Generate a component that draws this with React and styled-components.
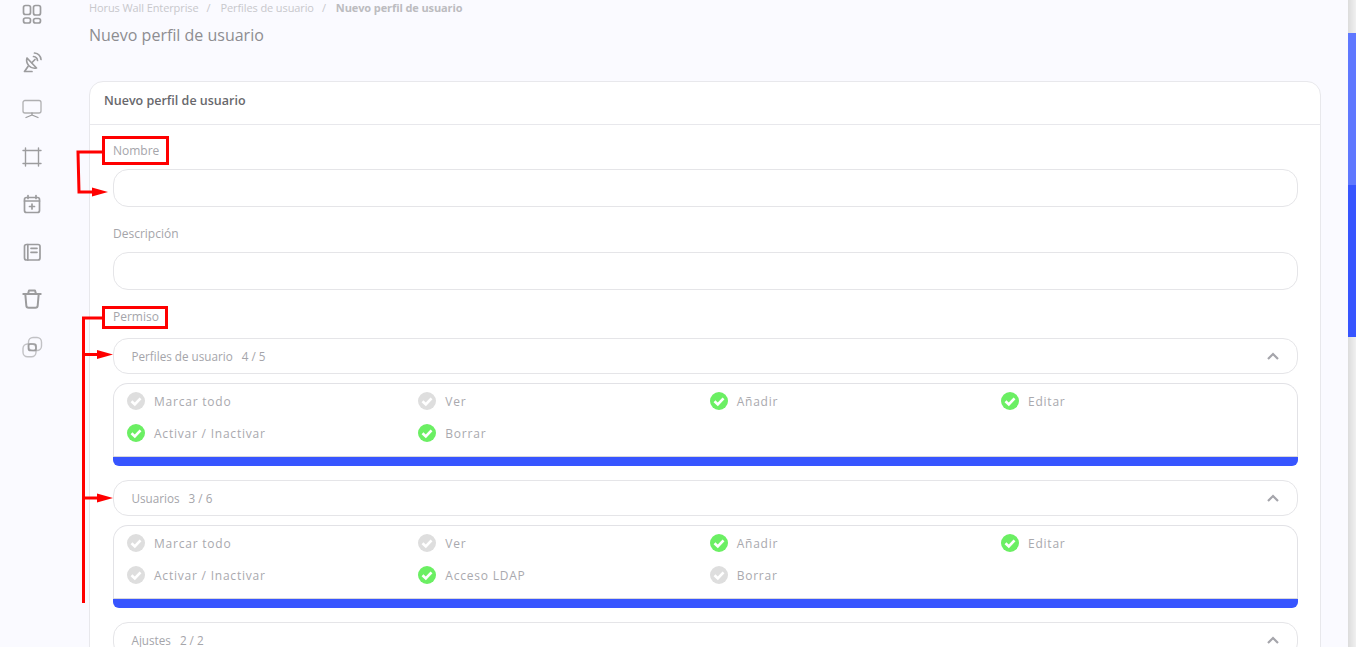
import React from 'react';
import styled, { createGlobalStyle } from 'styled-components';

const GlobalStyle = createGlobalStyle`
  html, body {
    margin: 0;
    height: 100%;
    overflow: hidden;
    background: #fafaff;
    font-family: 'Open Sans', 'Liberation Sans', sans-serif;
  }
  * { box-sizing: border-box; }
`;

const Shell = styled.div`
  position: relative;
  display: flex;
  width: 1356px;
  height: 647px;
  overflow: hidden;
  background: #fafaff;
`;

const Sidebar = styled.nav`
  flex: 0 0 64px;
  display: flex;
  flex-direction: column;
  align-items: center;
  gap: 23.5px;
  margin-top: 2px;
`;

const NavIcon = styled.svg`
  width: 24px;
  height: 24px;
  fill: none;
  stroke: #9c9c9e;
  stroke-width: 1.7;
  stroke-linecap: round;
  stroke-linejoin: round;
`;

const Main = styled.main`
  flex: 1;
  min-width: 0;
  padding: 0 27px 0 25px;
`;

const Crumbs = styled.div`
  display: flex;
  height: 14px;
  align-items: center;
  font-size: 11px;
  letter-spacing: -0.1px;
  color: #c8c8cc;
`;

const CrumbSep = styled.span`
  margin: 0 10px 0 8px;
`;

const CrumbNow = styled.b`
  font-weight: 700;
  color: #bcbcc0;
`;

const Title = styled.h1`
  margin: 11px 0 0;
  font-size: 16px;
  line-height: 20px;
  font-weight: 400;
  color: #8d8d91;
`;

const Card = styled.section`
  margin-top: 36px;
  background: #fff;
  border: 1px solid #e8e8ec;
  border-radius: 14px 14px 0 0;
  width: 1232px;
`;

const CardHead = styled.div`
  height: 43px;
  padding: 0 14px 6px;
  display: flex;
  align-items: center;
  border-bottom: 1px solid #e8e8ec;
  font-size: 12.5px;
  font-weight: 600;
  color: #68686c;
`;

const CardBody = styled.div`
  padding: 19px 22px 0 23px;
`;

const Label = styled.label`
  display: block;
  height: 14px;
  line-height: 14px;
  margin-bottom: ${p => p.$gap}px;
  font-size: 12px;
  color: #a5a5aa;
`;

const Input = styled.div`
  height: 38px;
  margin-bottom: 20px;
  border: 1px solid #e5e5e8;
  border-radius: 15px;
  background: #fff;
`;

const AccordionHead = styled.div`
  display: flex;
  align-items: center;
  justify-content: space-between;
  height: 36px;
  padding: 0 17px 0 17.500px;
  border: 1px solid #e5e5e8;
  border-radius: 15px;
  font-size: 11.7px;
  color: #a5a5aa;
`;

const Count = styled.span`
  margin-left: 9px;
`;

const Chevron = styled.svg`
  width: 14px;
  height: 14px;
  fill: none;
  stroke: #a5a5ab;
  stroke-width: 2.2;
`;

const Panel = styled.div`
  margin-top: 9px;
  margin-bottom: 14px;
  height: 83px;
  display: flex;
  flex-direction: column;
`;

const PermGrid = styled.div`
  flex: 1;
  display: grid;
  grid-template-columns: repeat(4, 291.33px);
  grid-auto-rows: 32px;
  padding: 1px 0 0 13px;
  border: 1px solid #e2e2e6;
  border-bottom: 0;
  border-radius: 15px 15px 0 0;
`;

const Perm = styled.div`
  display: flex;
  align-items: center;
  gap: 9px;
  font-size: 12px;
  letter-spacing: 0.78px;
  color: #a9a9ae;
`;

const CheckDot = styled.svg`
  width: 18px;
  height: 18px;
  flex: none;
`;

const BlueBar = styled.div`
  height: 10px;
  background: #3755ff;
  border-top: 1px solid #d8d8dc;
  border-radius: 0 0 6px 6px;
`;

const Scrollbar = styled.div`
  position: absolute;
  top: 0;
  right: 0;
  width: 8px;
  height: 647px;
  background: linear-gradient(to right, #dcdcdc, #f0f0f0);
`;

const ThumbPart = styled.div`
  height: 152px;
  background: ${p => p.$light ? '#5f78ff' : '#3755ff'};
  &:first-child { margin-top: 33px; }
`;

// red hand-drawn notes laid over the screenshot
const Notes = styled.svg`
  position: absolute;
  inset: 0;
  width: 1356px;
  height: 647px;
  pointer-events: none;
  fill: none;
  stroke: #f00;
  stroke-width: 3;
`;

const Check = ({ on }) => (
  <CheckDot viewBox="0 0 18 18">
    <circle cx="9" cy="9" r="9" fill={on ? '#6bef63' : '#dedede'} />
    <path d="M4.500 9.300 7.800 12.400 13.500 6.400" fill="none" stroke="#fff" strokeWidth="2.700" />
  </CheckDot>
);

const groups = [
  {
    name: 'Perfiles de usuario',
    count: '4 / 5',
    items: [['Marcar todo', 0], ['Ver', 0], ['Añadir', 1], ['Editar', 1], ['Activar / Inactivar', 1], ['Borrar', 1]],
  },
  {
    name: 'Usuarios',
    count: '3 / 6',
    items: [['Marcar todo', 0], ['Ver', 0], ['Añadir', 1], ['Editar', 1], ['Activar / Inactivar', 0], ['Acceso LDAP', 1], ['Borrar', 0]],
  },
];

const navIcons = [
  <><rect x="3.500" y="3.500" width="7" height="9" rx="2" /><rect x="3.500" y="16" width="7" height="5" rx="2" /><rect x="13.500" y="3.500" width="7" height="9.500" rx="2" /><rect x="13.500" y="16.500" width="7" height="4.500" rx="2" /></>,
  <><path d="M7 8a8 8 0 0 0 9.500 10L7 8Z" /><path d="M8 16.500 4.500 21.500H12" /><path d="m12 12.500 3-3" /><path d="M13.500 6.500a4.500 4.500 0 0 1 4 4" /><path d="M14.500 3a7.500 7.500 0 0 1 6.500 6.500" /></>,
  <><path d="M5 3.500h14a2 2 0 0 1 2 2V14a2 2 0 0 1-2 2H5a2 2 0 0 1-2-2V5.500a2 2 0 0 1 2-2Z" strokeWidth="1.300" strokeOpacity=".8" /><path d="M12 16v2M6 20.500 12 18l6 2.500" strokeWidth="1.300" /></>,
  <path d="M5.500 3v18M18.500 3v18M3 5.500h18M3 18.500h18" strokeWidth="1.400" />,
  <><rect x="4.500" y="5.500" width="15" height="15" rx="2" /><path d="M4.500 9h15M8 3.500v3M16 3.500v3M12 12v5M9.500 14.500h5" /></>,
  <><rect x="4.500" y="4.500" width="15.500" height="15.500" rx="2" /><path d="M7.800 4.500v15.500M11 8.300h6M11 12.300h6" /></>,
  <path d="M3.300 7h17.400M5.300 7l1 11.500a2.400 2.400 0 0 0 2.400 2.300h6.600a2.400 2.400 0 0 0 2.400-2.300L18.700 7M8 7l1-3.500h6L16 7" strokeWidth="2" />,
  <><rect x="3" y="9" width="13" height="12.700" rx="4.500" strokeOpacity=".6" strokeWidth="1.400" /><rect x="8.500" y="2.500" width="13" height="13" rx="4.500" strokeOpacity=".6" strokeWidth="1.400" /><rect x="8.500" y="9" width="7.500" height="6.500" rx="2" /></>,
];

const AccordionTitle = ({ name, count }) => (
  <AccordionHead>
    <span>{name}<Count>{count}</Count></span>
    <Chevron viewBox="0 0 14 14"><path d="M2 10l5-5 5 5" /></Chevron>
  </AccordionHead>
);

export default function App() {
  return (
    <Shell>
      <GlobalStyle />
      <Sidebar>
        {navIcons.map((icon, i) => <NavIcon key={i} viewBox="0 0 24 24">{icon}</NavIcon>)}
      </Sidebar>
      <Main>
        <Crumbs>
          Horus Wall Enterprise<CrumbSep>/</CrumbSep>Perfiles de usuario<CrumbSep>/</CrumbSep><CrumbNow>Nuevo perfil de usuario</CrumbNow>
        </Crumbs>
        <Title>Nuevo perfil de usuario</Title>
        <Card>
          <CardHead>Nuevo perfil de usuario</CardHead>
          <CardBody>
            <Label $gap={11}>Nombre</Label>
            <Input />
            <Label $gap={11}>Descripción</Label>
            <Input />
            <Label $gap={14}>Permiso</Label>
            {groups.map(g => (
              <div key={g.name}>
                <AccordionTitle name={g.name} count={g.count} />
                <Panel>
                  <PermGrid>
                    {g.items.map(([label, on]) => (
                      <Perm key={label}><Check on={on} />{label}</Perm>
                    ))}
                  </PermGrid>
                  <BlueBar />
                </Panel>
              </div>
            ))}
            <AccordionTitle name="Ajustes" count="2 / 2" />
          </CardBody>
        </Card>
      </Main>
      <Scrollbar>
        <ThumbPart $light />
        <ThumbPart />
      </Scrollbar>
      <Notes viewBox="0 0 1356 647">
        <rect x="103.500" y="137.500" width="64" height="26" />
        <path d="M103 152H78l1 40h20" />
        <path d="M92 187.500 108 192 92 196.500Z" fill="#f00" stroke="none" />
        <rect x="103.500" y="307.500" width="63" height="20" />
        <path d="M103 318H83.500V603" />
        <path d="M85 354.500h15M85 498h15" />
        <path d="M97 350 113 354.500 97 359ZM97 493.500 113 498 97 502.500Z" fill="#f00" stroke="none" />
      </Notes>
    </Shell>
  );
}
